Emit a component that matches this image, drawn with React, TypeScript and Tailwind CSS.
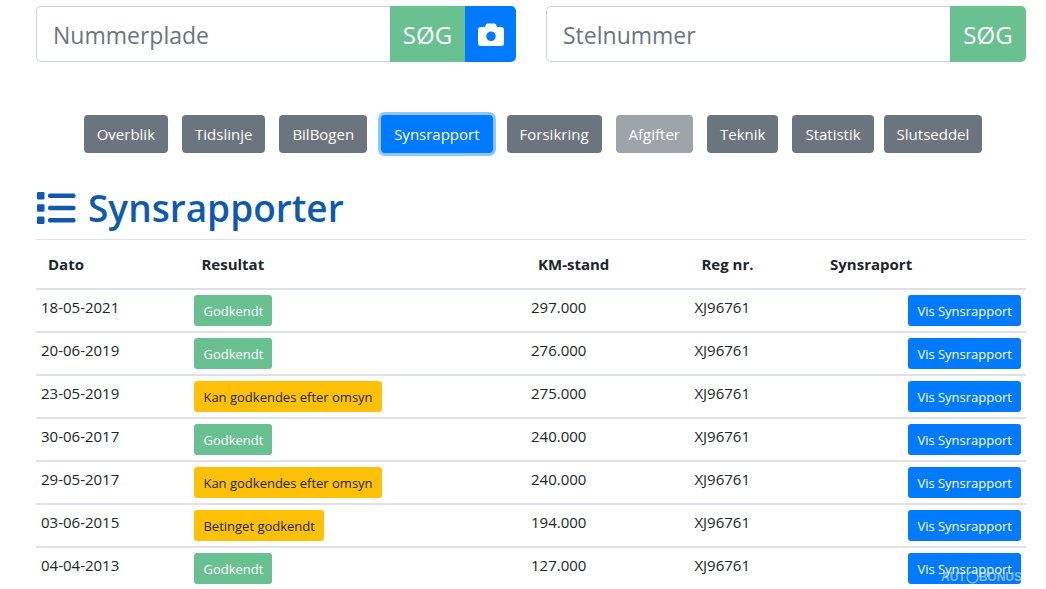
import React from "react";
import clsx from "clsx";

const tabs = ["Overblik", "Tidslinje", "BilBogen", "Synsrapport", "Forsikring", "Afgifter", "Teknik"];
const lastTabs = ["Statistik", "Slutseddel"];

const reports = [
  { date: "18-05-2021", result: "Godkendt", km: "297.000", reg: "XJ96761" },
  { date: "20-06-2019", result: "Godkendt", km: "276.000", reg: "XJ96761" },
  { date: "23-05-2019", result: "Kan godkendes efter omsyn", km: "275.000", reg: "XJ96761" },
  { date: "30-06-2017", result: "Godkendt", km: "240.000", reg: "XJ96761" },
  { date: "29-05-2017", result: "Kan godkendes efter omsyn", km: "240.000", reg: "XJ96761" },
  { date: "03-06-2015", result: "Betinget godkendt", km: "194.000", reg: "XJ96761" },
  { date: "04-04-2013", result: "Godkendt", km: "127.000", reg: "XJ96761" },
];

export default function App() {
  return <main className="relative bg-white pl-9 pr-5 pt-1.5 font-['Open_Sans',sans-serif] text-[15px] leading-6 text-[#212529]">
      <div className="grid grid-cols-2 gap-[30px]">
        <SearchBox label="Nummerplade" camera />
        <SearchBox label="Stelnummer" />
      </div>
      <nav className="mt-[53px] flex justify-center gap-3.5 pl-1">
        {tabs.map((tab) => <TabButton key={tab} label={tab} />)}
        <div className="flex gap-2.5">
          {lastTabs.map((tab) => <TabButton key={tab} label={tab} />)}
        </div>
      </nav>
      <h1 className="mb-1 mt-7 flex h-[54px] items-center gap-3 text-[37px] font-semibold leading-[48px] text-[#0f5aae]">
        <ListIcon />
        Synsrapporter
      </h1>
      {/* Inspection reports */}
      <table className="w-full table-fixed border-collapse text-left">
        <colgroup>
          <col className="w-[15.5%]" />
          <col className="w-[34%]" />
          <col className="w-[16.5%]" />
          <col className="w-[13%]" />
          <col className="w-[21%]" />
        </colgroup>
        <thead>
          <tr className="border-t border-[#dee2e6] text-[15px]">
            <th className="px-3 py-3 font-bold">Dato</th>
            <th className="px-3 py-3 font-bold">Resultat</th>
            <th className="px-3 py-3 font-bold">KM-stand</th>
            <th className="px-3 py-3 font-bold">Reg nr.</th>
            <th className="px-3 py-3 font-bold">Synsraport</th>
          </tr>
        </thead>
        <tbody>
          {reports.map((report) => <tr key={report.date} className="border-t-2 border-[#dee2e6] align-top">
              <td className="p-[5px]">{report.date}</td>
              <td className="p-[5px]">
                <ResultBadge result={report.result} />
              </td>
              <td className="p-[5px]">{report.km}</td>
              <td className="p-[5px]">{report.reg}</td>
              <td className="p-[5px]">
                <button className="ml-auto block h-[31px] rounded-[3px] bg-[#007bff] px-[9px] text-[13px] text-white">
                  Vis Synsrapport
                </button>
              </td>
            </tr>)}
        </tbody>
      </table>
      <Watermark />
    </main>;
}

const SearchBox = ({ label, camera = false }: { label: string; camera?: boolean }) => {
  return <form className="flex h-14">
      <input type="text" aria-label={label} placeholder={label} className="min-w-0 flex-1 rounded-l-[5px] border border-r-0 border-[#ced4da] px-4 pt-0.5 text-[23px] placeholder:text-[#6c757d]" />
      <button type="button" className={clsx("bg-[#69c091] pt-0.5 text-[24px] text-white", camera ? "w-[75px]" : "w-[76px] rounded-r-[5px]")}>
        SØG
      </button>
      {camera && <button type="button" aria-label="Kamera" className="flex w-[51px] items-center justify-center rounded-r-[5px] bg-[#007bff] pt-0.5">
          <svg width="26" height="24" viewBox="0 0 26 24" fill="#fff">
            <path fillRule="evenodd" d="M3 4H7L8 1.6Q8.5.5 9.7.5H16.3Q17.5.5 18 1.6L19 4H23Q26 4 26 7V20Q26 23 23 23H3Q0 23 0 20V7Q0 4 3 4ZM13 8.5A4.8 4.8 0 1 0 13 18.1A4.8 4.8 0 1 0 13 8.5Z" />
          </svg>
        </button>}
    </form>;
};

const TabButton = ({ label }: { label: string }) => {
  const active = label === "Synsrapport";
  const disabled = label === "Afgifter";
  return <button disabled={disabled} className={clsx("h-[38px] rounded px-[13px] text-white", active && "bg-[#007bff] ring-3 ring-[#8fc6fb]", disabled && "bg-[#9ea4aa]", !active && !disabled && "bg-[#6c757d]")}>
      {label}
    </button>;
};

const ResultBadge = ({ result }: { result: string }) => {
  return <button className={clsx("block h-[31px] rounded-[3px] px-[9px] text-[13px]", result === "Godkendt" ? "bg-[#69c091] text-white" : "bg-[#ffc107] text-[#212529]")}>
      {result}
    </button>;
};

const ListIcon = () => {
  return <svg width="40" height="34" viewBox="0 0 40 34" fill="currentColor" className="shrink-0">
      <rect x="1" y="1" width="7.5" height="7.5" rx="1.2" />
      <rect x="1" y="13.2" width="7.5" height="7.5" rx="1.2" />
      <rect x="1" y="25.5" width="7.5" height="7.5" rx="1.2" />
      <rect x="12" y="2.5" width="27.5" height="4.6" rx="1.8" />
      <rect x="12" y="14.7" width="27.5" height="4.6" rx="1.8" />
      <rect x="12" y="27" width="27.5" height="4.6" rx="1.8" />
    </svg>;
};

const Watermark = () => {
  return <div className="pointer-events-none absolute bottom-1 right-6 flex items-center font-['Liberation_Sans',sans-serif] text-[12px] font-bold leading-4 text-[#dfe6ee]/60">
      AUT
      <svg width="13" height="13" viewBox="0 0 14 14" fill="none" stroke="currentColor" strokeWidth="1.6">
        <circle cx="7" cy="7" r="5.8" />
      </svg>
      BONUS
    </div>;
};
